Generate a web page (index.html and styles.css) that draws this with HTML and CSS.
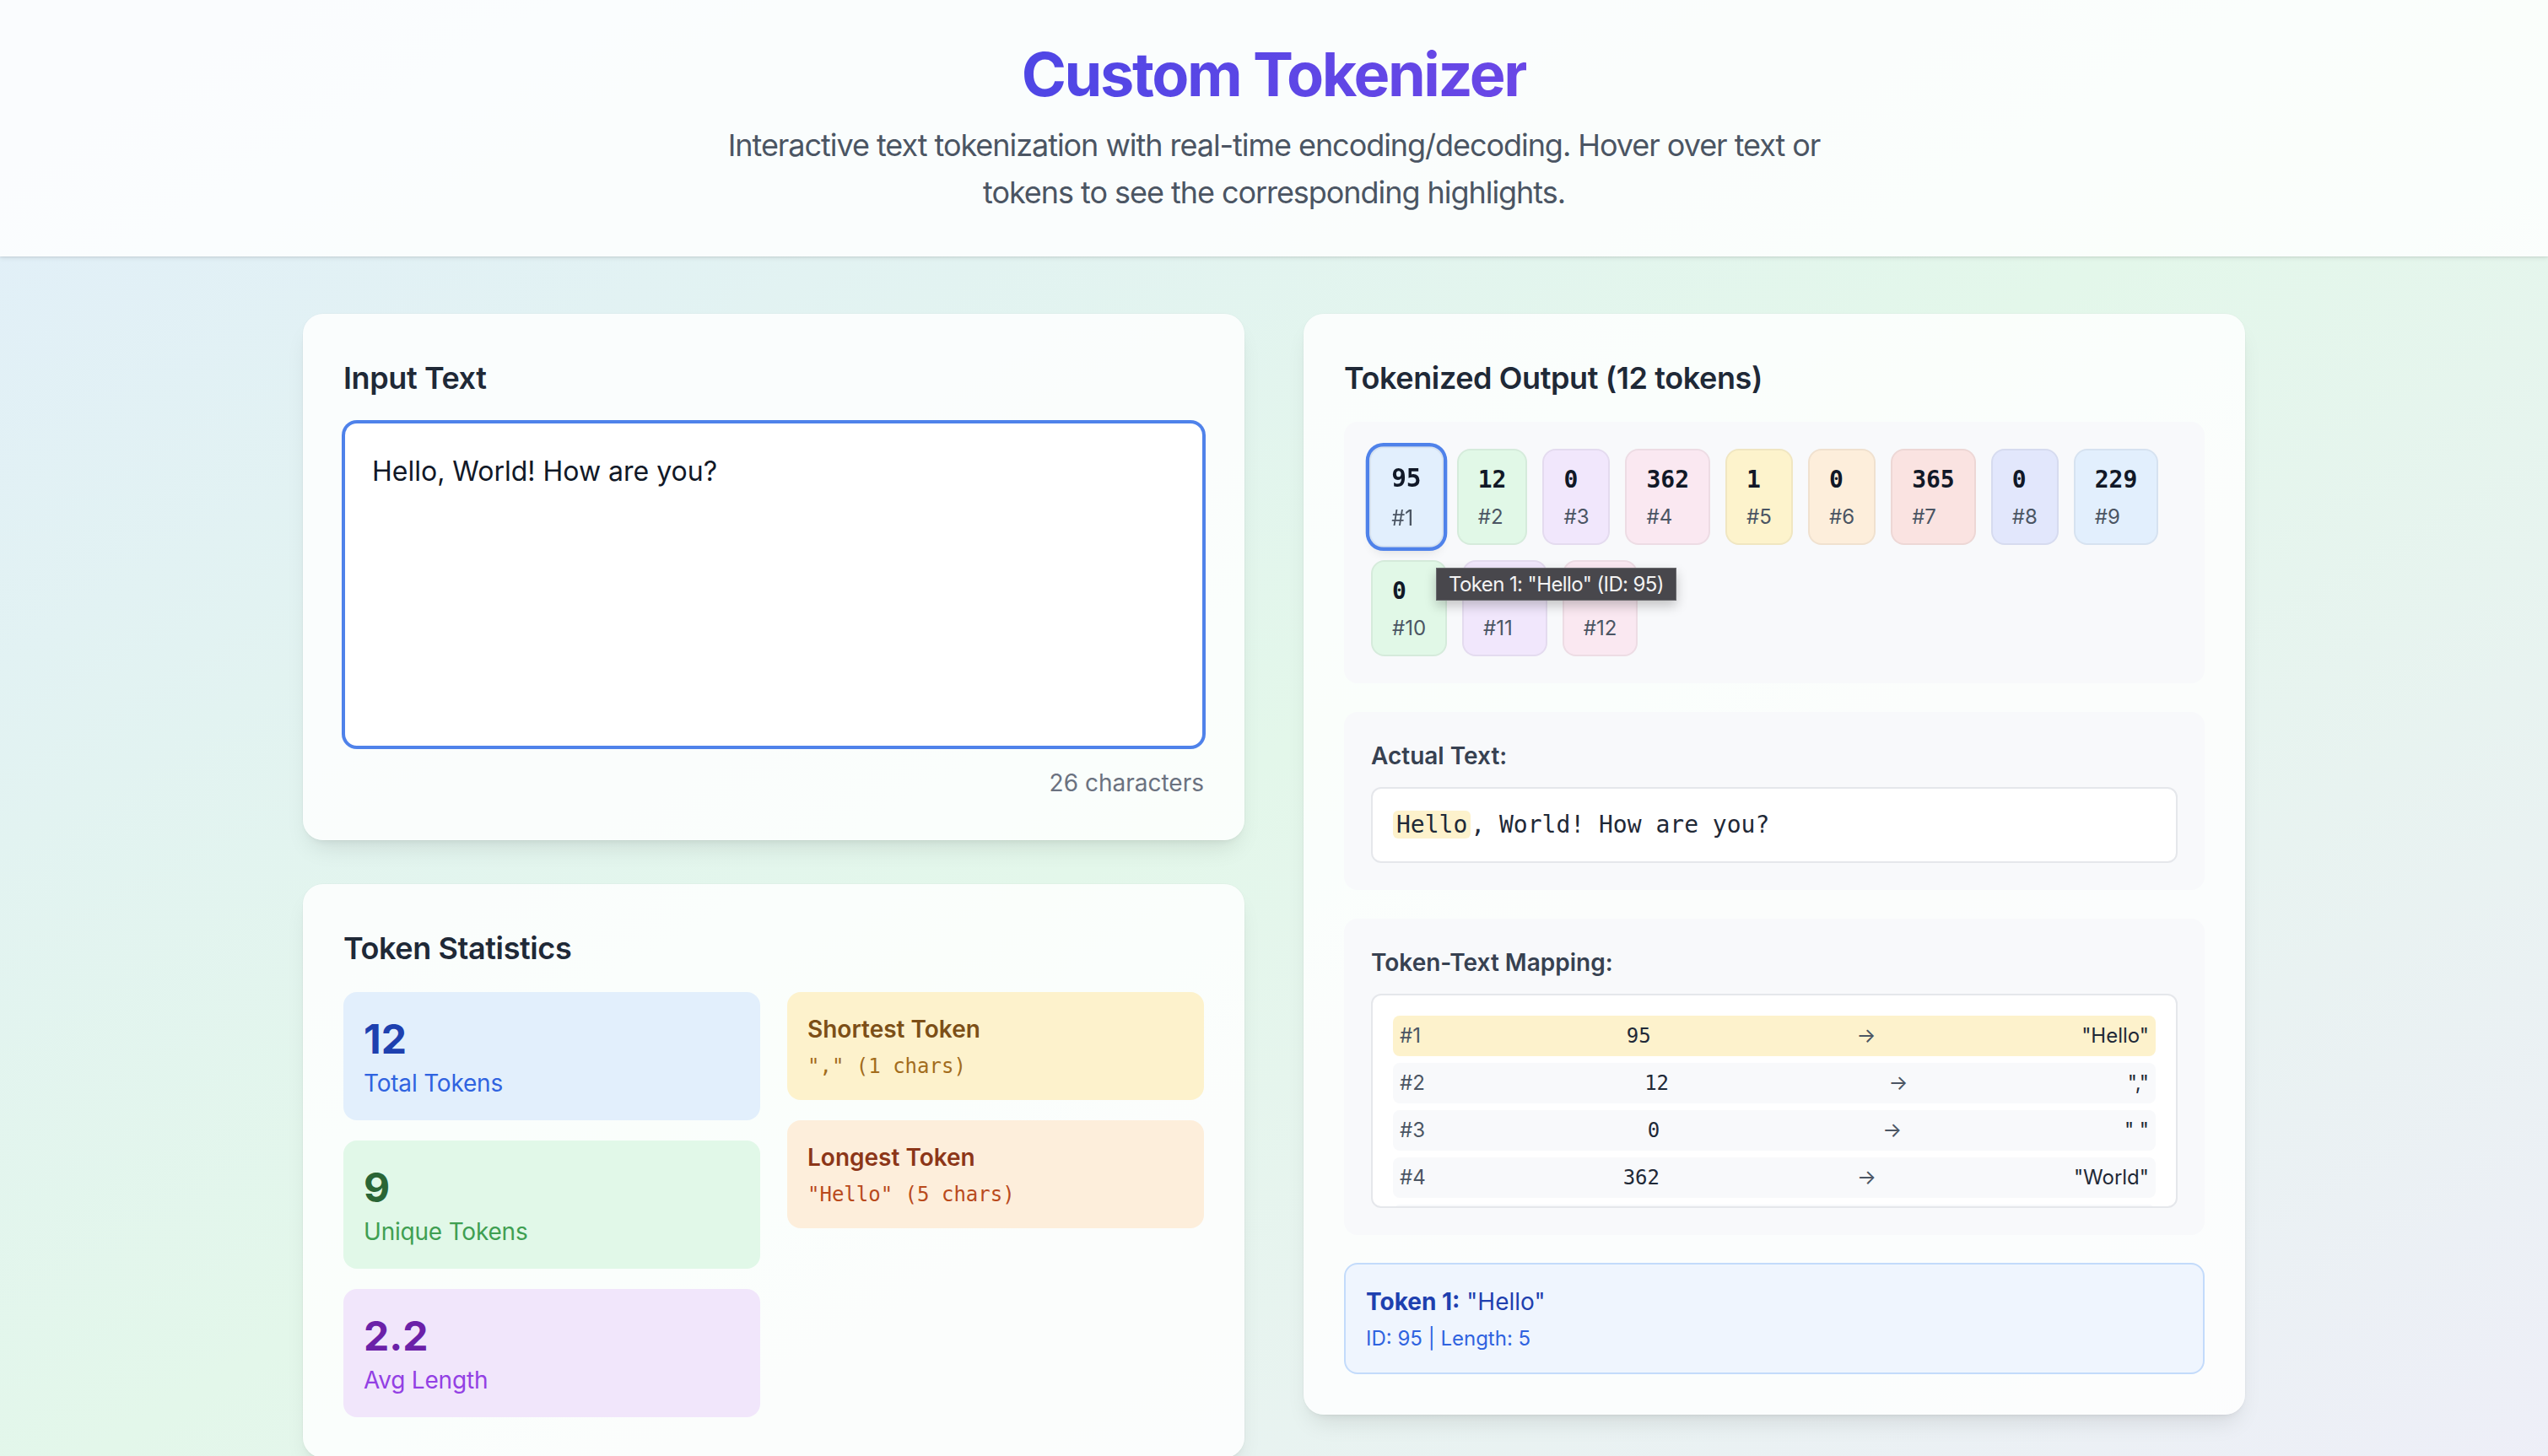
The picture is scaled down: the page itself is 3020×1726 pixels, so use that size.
FILE: index.html
```html
<!DOCTYPE html>
<html lang="en">
<head>
<meta charset="utf-8">
<title>Custom Tokenizer</title>
<link rel="stylesheet" href="styles.css">
</head>
<body>
<header class="site-header">
  <h1 class="title"><span class="title-text">Custom Tokenizer</span></h1>
  <p class="subtitle">Interactive text tokenization with real-time encoding/decoding. Hover over text or tokens to see the corresponding highlights.</p>
</header>

<main class="layout">
  <div class="column">
    <section class="card">
      <h2 class="card-title">Input Text</h2>
      <textarea class="input-area" spellcheck="false">Hello, World! How are you?</textarea>
      <div class="char-count">26 characters</div>
    </section>

    <section class="card">
      <h2 class="card-title">Token Statistics</h2>
      <div class="stats-grid">
        <div class="stats-col">
          <div class="stat stat-blue">
            <div class="stat-value">12</div>
            <div class="stat-label">Total Tokens</div>
          </div>
          <div class="stat stat-green">
            <div class="stat-value">9</div>
            <div class="stat-label">Unique Tokens</div>
          </div>
          <div class="stat stat-purple">
            <div class="stat-value">2.2</div>
            <div class="stat-label">Avg Length</div>
          </div>
        </div>
        <div class="stats-col">
          <div class="extreme extreme-yellow">
            <div class="extreme-title">Shortest Token</div>
            <div class="extreme-value">"," (1 chars)</div>
          </div>
          <div class="extreme extreme-orange">
            <div class="extreme-title">Longest Token</div>
            <div class="extreme-value">"Hello" (5 chars)</div>
          </div>
        </div>
      </div>
    </section>
  </div>

  <div class="column">
    <section class="card">
      <h2 class="card-title">Tokenized Output (12 tokens)</h2>

      <div class="panel tokens-panel">
        <div class="chips">
          <div class="chip chip-blue chip-active"><div class="chip-id">95</div><div class="chip-idx">#1</div></div>
          <div class="chip chip-green"><div class="chip-id">12</div><div class="chip-idx">#2</div></div>
          <div class="chip chip-purple"><div class="chip-id">0</div><div class="chip-idx">#3</div></div>
          <div class="chip chip-pink"><div class="chip-id">362</div><div class="chip-idx">#4</div></div>
          <div class="chip chip-yellow"><div class="chip-id">1</div><div class="chip-idx">#5</div></div>
          <div class="chip chip-orange"><div class="chip-id">0</div><div class="chip-idx">#6</div></div>
          <div class="chip chip-red"><div class="chip-id">365</div><div class="chip-idx">#7</div></div>
          <div class="chip chip-indigo"><div class="chip-id">0</div><div class="chip-idx">#8</div></div>
          <div class="chip chip-blue"><div class="chip-id">229</div><div class="chip-idx">#9</div></div>
          <div class="chip chip-green"><div class="chip-id">0</div><div class="chip-idx">#10</div></div>
          <div class="chip chip-purple"><div class="chip-id">487</div><div class="chip-idx">#11</div></div>
          <div class="chip chip-pink"><div class="chip-id">13</div><div class="chip-idx">#12</div></div>
        </div>
        <div class="tooltip">Token 1: "Hello" (ID: 95)</div>
      </div>

      <div class="panel">
        <div class="panel-label">Actual Text:</div>
        <div class="actual-text"><span class="hl">Hello</span>, World! How are you?</div>
      </div>

      <div class="panel panel-last">
        <div class="panel-label">Token-Text Mapping:</div>
        <div class="mapping">
          <div class="map-row map-row-active"><span class="map-idx">#1</span><span class="map-id">95</span><span class="map-arrow">→</span><span class="map-text">"Hello"</span></div>
          <div class="map-row"><span class="map-idx">#2</span><span class="map-id">12</span><span class="map-arrow">→</span><span class="map-text">","</span></div>
          <div class="map-row"><span class="map-idx">#3</span><span class="map-id">0</span><span class="map-arrow">→</span><span class="map-text">" "</span></div>
          <div class="map-row"><span class="map-idx">#4</span><span class="map-id">362</span><span class="map-arrow">→</span><span class="map-text">"World"</span></div>
          <div class="map-row map-row-more" aria-hidden="true"></div>
        </div>
      </div>

      <div class="info-box">
        <div class="info-main"><strong>Token 1:</strong> "Hello"</div>
        <div class="info-sub">ID: 95 | Length: 5</div>
      </div>
    </section>
  </div>
</main>
</body>
</html>
```

FILE: styles.css
```css
html, body {
  margin: 0;
  padding: 0;
}

body {
  min-height: 100vh;
  font-family: "Inter", "Noto Sans", "Liberation Sans", sans-serif;
  color: #1f2937;
  background: linear-gradient(to bottom right, #e1eefa 0%, #e3f7ea 50%, #eeeef8 100%);
}

.site-header {
  background: rgba(255, 255, 255, 0.82);
  box-shadow: 0 2px 6px rgba(0, 0, 0, 0.08), 0 1px 2px rgba(0, 0, 0, 0.08);
  padding: 48px 0;
  text-align: center;
}

.title {
  margin: 0 0 16px;
  font-size: 72px;
  line-height: 80px;
  font-weight: 700;
  letter-spacing: -2.4px;
}

.title-text {
  display: inline-block;
  background: linear-gradient(90deg, #4f46e5 0%, #6a47e6 100%);
  -webkit-background-clip: text;
  background-clip: text;
  color: transparent;
}

.subtitle {
  margin: 0 auto;
  max-width: 1344px;
  font-size: 36px;
  line-height: 56px;
  letter-spacing: -1.05px;
  color: #4b5563;
}

.layout {
  width: 2302px;
  margin: 0 auto;
  padding: 68px 0 64px;
  display: grid;
  grid-template-columns: 1fr 1fr;
  column-gap: 70px;
  align-items: start;
}

.column {
  display: flex;
  flex-direction: column;
  gap: 52px;
}

.card {
  background: rgba(255, 255, 255, 0.82);
  border-radius: 24px;
  padding: 48px;
  box-shadow: 0 16px 28px -8px rgba(0, 0, 0, 0.10), 0 6px 10px -6px rgba(0, 0, 0, 0.08), 0 0 0 1px rgba(0, 0, 0, 0.02);
}

.card-title {
  margin: 0 0 24px;
  font-size: 36px;
  line-height: 56px;
  font-weight: 600;
  letter-spacing: -0.4px;
  color: #1f2937;
}

.input-area {
  display: block;
  box-sizing: border-box;
  width: 100%;
  height: 386px;
  margin: 0;
  padding: 33px 32px 32px;
  border: 2px solid #4f82ea;
  box-shadow: 0 0 0 2px #4f82ea;
  border-radius: 16px;
  background: #ffffff;
  font-family: "Inter", "Noto Sans", sans-serif;
  font-size: 32px;
  line-height: 48px;
  color: #111827;
  resize: none;
  outline: none;
}

.char-count {
  margin-top: 22px;
  text-align: right;
  font-size: 28px;
  line-height: 40px;
  color: #6b7280;
}

/* Statistics */
.stats-grid {
  display: grid;
  grid-template-columns: 1fr 1fr;
  column-gap: 32px;
  align-items: start;
}

.stats-col {
  display: flex;
  flex-direction: column;
  gap: 24px;
}

.stat {
  border-radius: 16px;
  padding: 24px;
}

.stat-value {
  font-size: 48px;
  line-height: 64px;
  font-weight: 700;
}

.stat-label {
  font-size: 28px;
  line-height: 40px;
  letter-spacing: -0.2px;
}

.stat-blue { background: #e2effc; }
.stat-blue .stat-value { color: #1e40af; }
.stat-blue .stat-label { color: #2f63e0; }

.stat-green { background: #e1f8e8; }
.stat-green .stat-value { color: #2a6535; }
.stat-green .stat-label { color: #3f9f52; }

.stat-purple { background: #f1e6fb; }
.stat-purple .stat-value { color: #6b21a8; }
.stat-purple .stat-label { color: #9340e4; }

.extreme {
  border-radius: 16px;
  padding: 24px;
}

.extreme-title {
  font-size: 28px;
  line-height: 40px;
  font-weight: 600;
}

.extreme-value {
  margin-top: 8px;
  font-family: "DejaVu Sans Mono", "Liberation Mono", monospace;
  font-size: 24px;
  line-height: 32px;
}

.extreme-yellow { background: #fdf2cc; }
.extreme-yellow .extreme-title { color: #7c4f17; }
.extreme-yellow .extreme-value { color: #a26c1c; }

.extreme-orange { background: #fdeedb; }
.extreme-orange .extreme-title { color: #8c3618; }
.extreme-orange .extreme-value { color: #b94a1c; }

/* Output panels */
.panel {
  background: #f8f9fb;
  border-radius: 16px;
  padding: 32px;
  margin-bottom: 34px;
}

.panel-last {
  margin-bottom: 33px;
}

.tokens-panel {
  position: relative;
}

.chips {
  display: flex;
  flex-wrap: wrap;
  gap: 18px;
}

.chip {
  box-sizing: border-box;
  min-width: 80px;
  padding: 15px 23px;
  border: 2px solid rgba(0, 0, 0, 0.05);
  border-radius: 16px;
}

.chip-id {
  font-family: "DejaVu Sans Mono", "Liberation Mono", monospace;
  font-size: 28px;
  line-height: 40px;
  font-weight: 700;
  color: #111827;
}

.chip-idx {
  margin-top: 8px;
  font-size: 24px;
  line-height: 32px;
  color: #4b5563;
}

.chip-blue { background: #e2effd; }
.chip-green { background: #e1f8e7; }
.chip-purple { background: #f1e7fc; }
.chip-pink { background: #fae8f1; }
.chip-yellow { background: #fdf3cc; }
.chip-orange { background: #fdeedb; }
.chip-red { background: #fae3e1; }
.chip-indigo { background: #e2e7fc; }

.chip-active {
  transform: scale(1.05);
  box-shadow: 0 0 0 4px #4f82ea, 0 8px 12px -4px rgba(0, 0, 0, 0.12);
}

.tooltip {
  position: absolute;
  left: 109px;
  top: 173px;
  box-sizing: border-box;
  height: 39px;
  padding: 0 14px;
  background: #48474c;
  border: 1px solid #6a6a6e;
  color: #f3f3f3;
  font-size: 24px;
  line-height: 37px;
  letter-spacing: -0.6px;
  white-space: nowrap;
  box-shadow: 0 6px 14px rgba(0, 0, 0, 0.22);
}

.panel-label {
  margin-bottom: 17px;
  font-size: 28px;
  line-height: 40px;
  font-weight: 600;
  color: #374151;
}

.actual-text {
  background: #ffffff;
  border: 2px solid #e5e7eb;
  border-radius: 12px;
  padding: 23px 24px;
  font-family: "DejaVu Sans Mono", "Liberation Mono", monospace;
  font-size: 28px;
  line-height: 40px;
  color: #1f2937;
  white-space: pre;
}

.hl {
  background: #fdf2cc;
  border-radius: 6px;
  padding: 0 4px;
}

.mapping {
  box-sizing: border-box;
  max-height: 254px;
  overflow: hidden;
  background: #ffffff;
  border: 2px solid #e5e7eb;
  border-radius: 12px;
  padding: 24px;
}

.map-row {
  display: flex;
  justify-content: space-between;
  align-items: center;
  padding: 8px;
  margin-bottom: 8px;
  border-radius: 8px;
  background: #f8f9fb;
  font-size: 24px;
  line-height: 32px;
  white-space: pre;
}

.map-row-more {
  height: 32px;
}

.map-row-active {
  background: #fdf2cc;
}

.map-idx { color: #4b5563; }
.map-id {
  font-family: "DejaVu Sans Mono", "Liberation Mono", monospace;
  color: #1f2937;
}
.map-arrow { color: #4b5563; }
.map-text { color: #1f2937; }

.info-box {
  background: #eff5fe;
  border: 2px solid #c3dbfb;
  border-radius: 16px;
  padding: 24px;
}

.info-main {
  font-size: 28px;
  line-height: 40px;
  color: #1e40af;
}

.info-main strong {
  font-weight: 700;
}

.info-sub {
  margin-top: 8px;
  font-size: 24px;
  line-height: 32px;
  color: #2f63e0;
}
```
